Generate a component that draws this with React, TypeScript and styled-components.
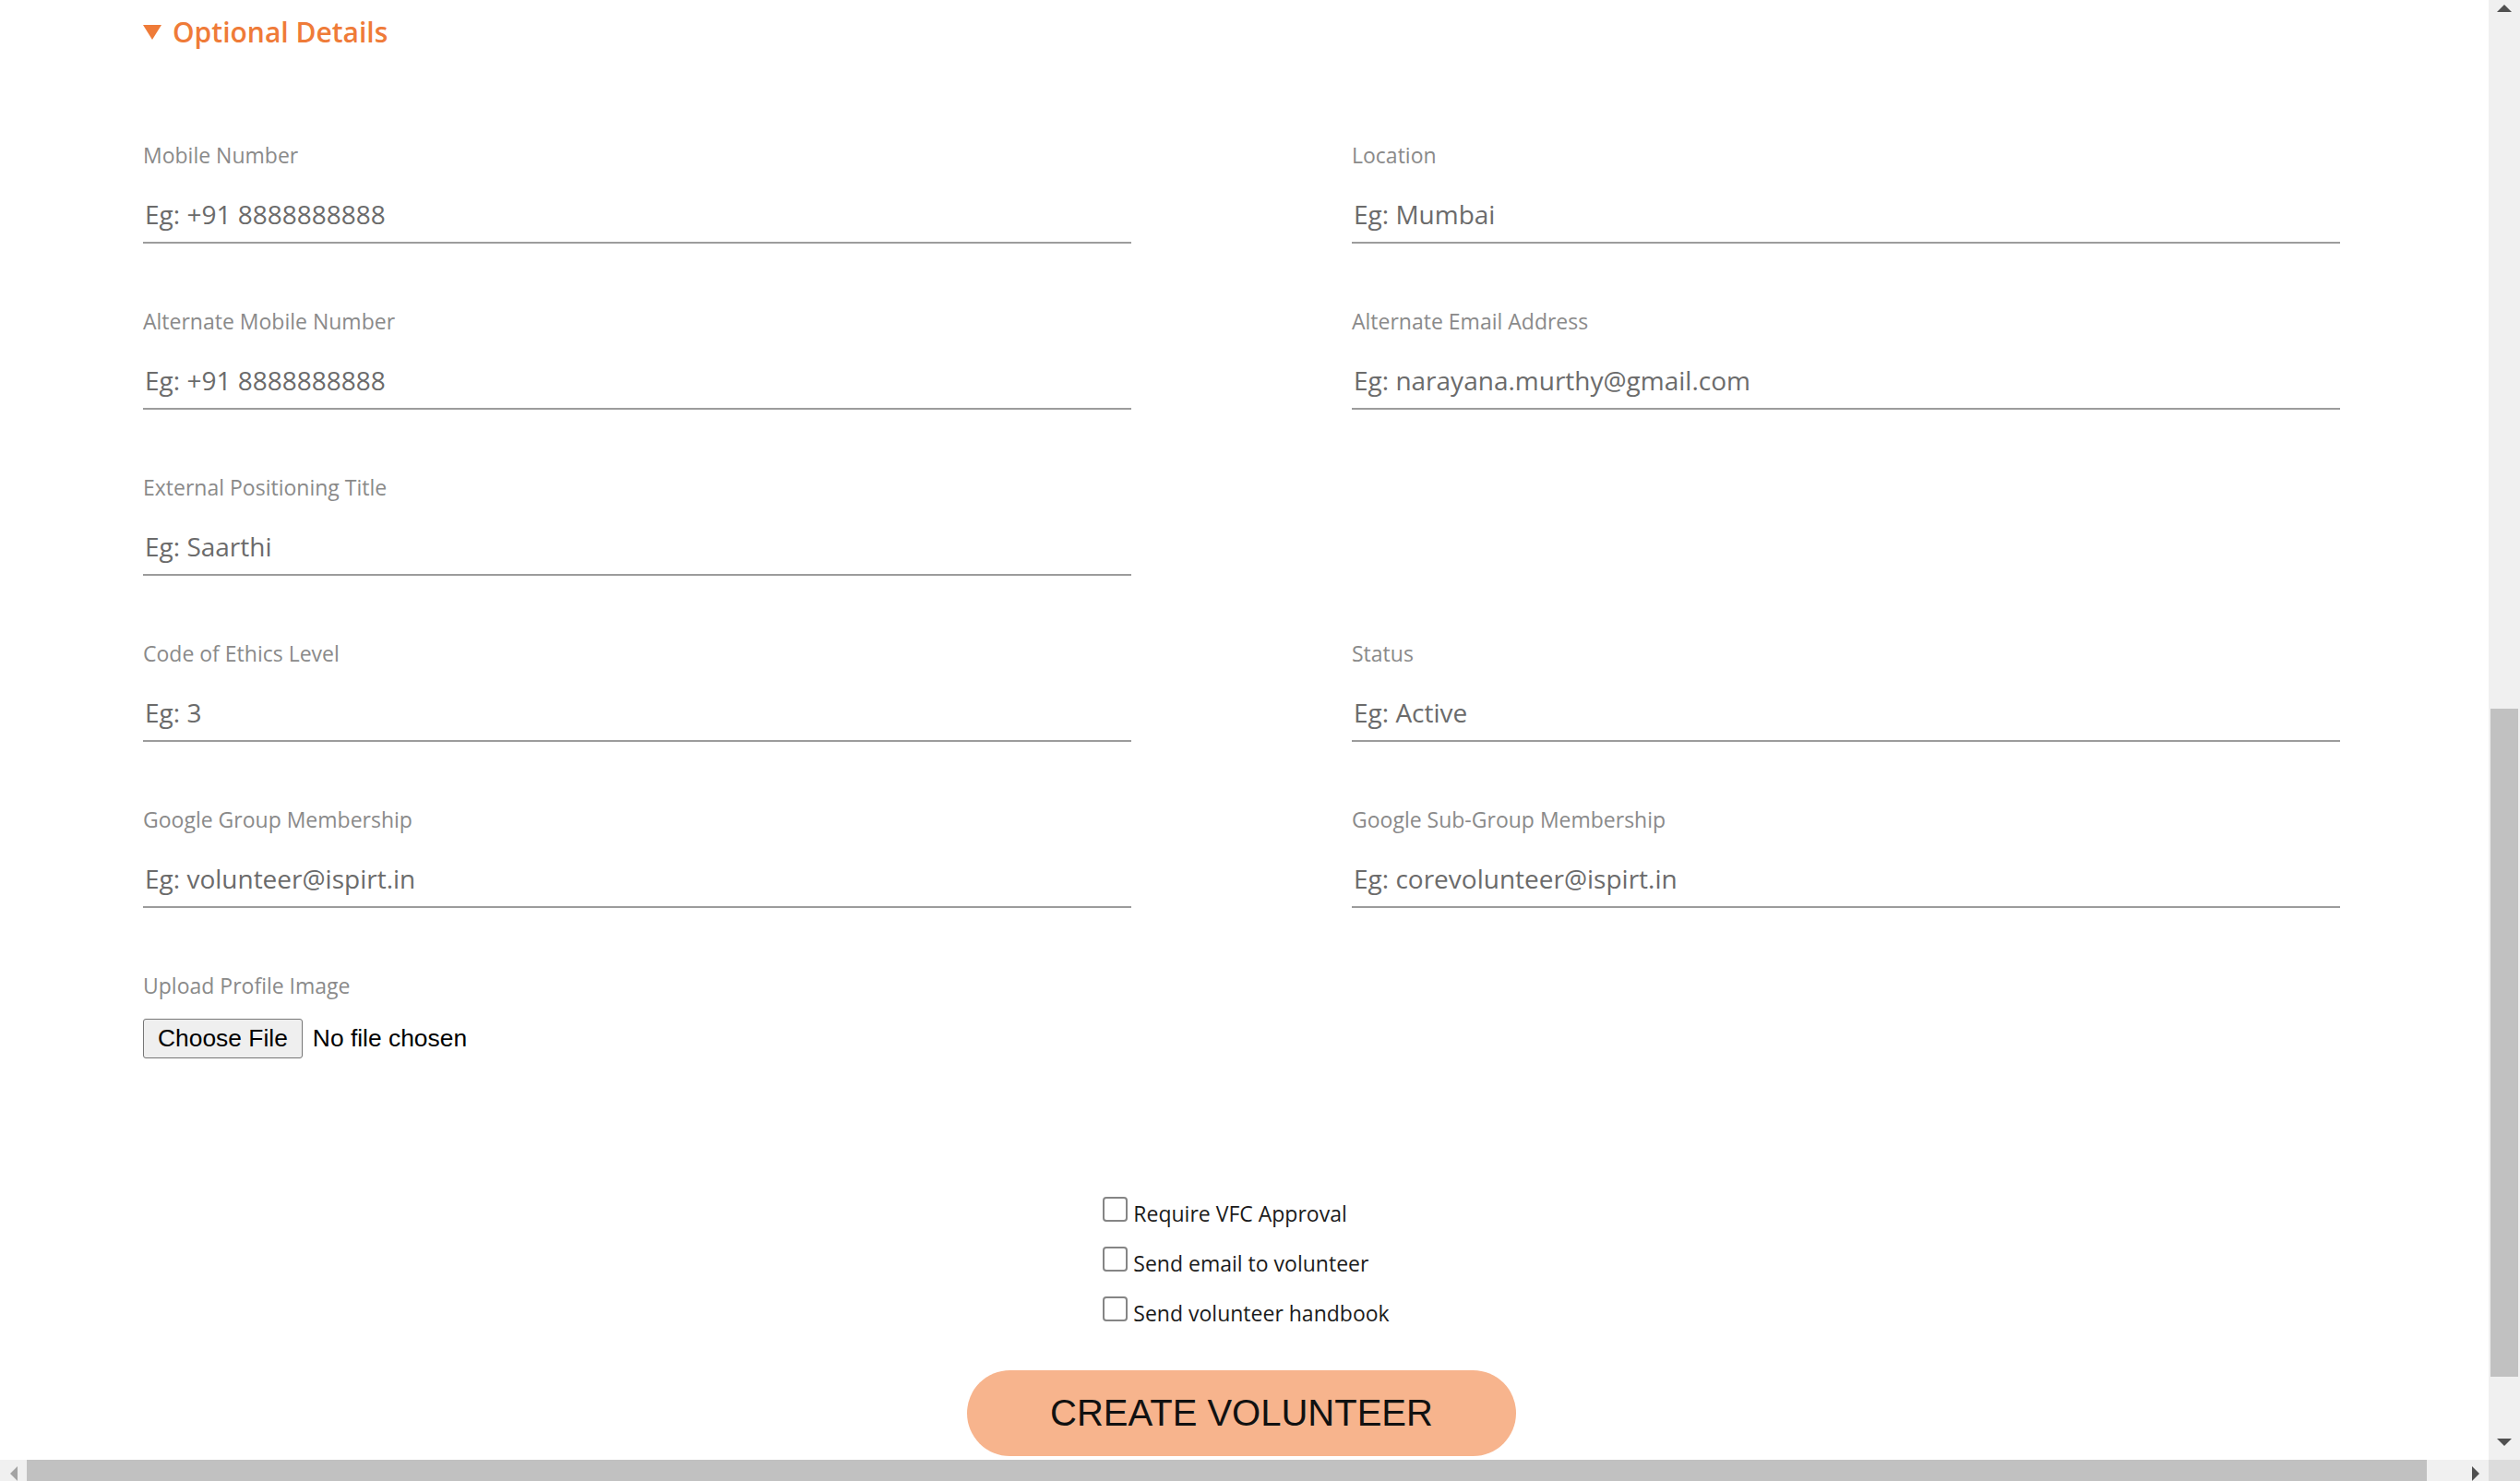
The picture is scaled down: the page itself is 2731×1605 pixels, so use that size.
import React from "react";
import styled, { createGlobalStyle, css } from "styled-components";

type FieldDef = { label: string; placeholder: string } | null;
type Dir = "up" | "down" | "left" | "right";

const optionalFields: FieldDef[] = [
  { label: "Mobile Number", placeholder: "Eg: +91 8888888888" },
  { label: "Location", placeholder: "Eg: Mumbai" },
  { label: "Alternate Mobile Number", placeholder: "Eg: +91 8888888888" },
  { label: "Alternate Email Address", placeholder: "Eg: narayana.murthy@gmail.com" },
  { label: "External Positioning Title", placeholder: "Eg: Saarthi" },
  null,
  { label: "Code of Ethics Level", placeholder: "Eg: 3" },
  { label: "Status", placeholder: "Eg: Active" },
  { label: "Google Group Membership", placeholder: "Eg: volunteer@ispirt.in" },
  { label: "Google Sub-Group Membership", placeholder: "Eg: corevolunteer@ispirt.in" },
];

const options = ["Require VFC Approval", "Send email to volunteer", "Send volunteer handbook"];

const TRACK = "#f0f0f0";

const GlobalStyle = createGlobalStyle`
  html, body {
    margin: 0;
    padding: 0;
    height: 100%;
    overflow: hidden;
    background: #fff;
  }
  #root {
    height: 100%;
  }
`;

/* window frame: page on the left/top, scrollbars on the right and bottom */
const Frame = styled.div`
  display: grid;
  grid-template-columns: 1fr 34px;
  grid-template-rows: 1fr 23px;
  width: 100vw;
  height: 100vh;
  overflow: hidden;
  font-family: "Open Sans", "Noto Sans", sans-serif;
`;

const Main = styled.main`
  min-width: 0;
  min-height: 0;
  overflow: hidden;
  padding: 13px 0 0 155px;
  background: #fff;
`;

const VBar = styled.div`
  display: flex;
  flex-direction: column;
  background: ${TRACK};
`;

const HBar = styled.div`
  display: flex;
  background: ${TRACK};
`;

const Corner = styled.div`
  background: #dcdcdc;
`;

const BarButton = styled.div<{ $w: number; $h: number; $pad: string }>`
  flex: none;
  display: flex;
  justify-content: center;
  align-items: flex-start;
  width: ${(p) => p.$w}px;
  height: ${(p) => p.$h}px;
  padding: ${(p) => p.$pad};
  box-sizing: border-box;
`;

const arrowShape = {
  up: css`
    border-width: 0 8px 8px;
    border-bottom-color: var(--c);
  `,
  down: css`
    border-width: 8px 8px 0;
    border-top-color: var(--c);
  `,
  left: css`
    border-width: 8px 8px 8px 0;
    border-right-color: var(--c);
  `,
  right: css`
    border-width: 8px 0 8px 8px;
    border-left-color: var(--c);
  `,
};

const Arrow = styled.span<{ $dir: Dir; $off?: boolean }>`
  --c: ${(p) => (p.$off ? "#a3a3a3" : "#505050")};
  width: 0;
  height: 0;
  border-style: solid;
  border-color: transparent;
  ${(p) => arrowShape[p.$dir]}
`;

const VTrack = styled.div`
  flex: 1;
  display: flex;
  flex-direction: column;
  padding: 0 2px;
`;

const HTrack = styled.div`
  flex: 1;
  display: flex;
`;

const Thumb = styled.div<{ $offset: number; $length: number; $vertical?: boolean }>`
  flex: none;
  background: #c1c1c1;
  ${(p) =>
    p.$vertical
      ? css`
          margin-top: ${p.$offset}px;
          height: ${p.$length}px;
        `
      : css`
          margin-left: ${p.$offset}px;
          width: ${p.$length}px;
        `}
`;

const Form = styled.form`
  width: 2381px;
`;

const Section = styled.details``;

const Summary = styled.summary`
  display: flex;
  align-items: center;
  gap: 12px;
  height: 44px;
  list-style: none;
  cursor: pointer;
  font: 600 30px/44px "Open Sans", sans-serif;
  color: #ef7b38;

  &::-webkit-details-marker {
    display: none;
  }
`;

const Caret = styled.span`
  width: 0;
  height: 0;
  border-left: 10px solid transparent;
  border-right: 10px solid transparent;
  border-top: 16px solid #ef7b38;
`;

const FieldGrid = styled.div`
  display: grid;
  grid-template-columns: 1071px 1071px;
  column-gap: 239px;
  row-gap: 68px;
  margin-top: 95px;
`;

const Field = styled.div`
  display: flex;
  flex-direction: column;
`;

const Label = styled.label`
  font: 400 23px/32px "Open Sans", sans-serif;
  color: #8a8a8a;
`;

const TextInput = styled.input`
  margin-top: 24px;
  height: 56px;
  box-sizing: border-box;
  padding: 0 2px 6px;
  border: none;
  border-bottom: 2px solid #9c9c9c;
  outline: none;
  background: transparent;
  font: 400 28px "Open Sans", sans-serif;
  color: #333;

  &::placeholder {
    color: #6b6b6b;
  }
`;

const FileInput = styled.input`
  align-self: flex-start;
  margin-top: 20px;
  height: 43px;
  font: 400 26.4px "Liberation Sans", Arial, sans-serif;
  color: #000;

  &::file-selector-button {
    height: 43px;
    margin: 0 11px 0 0;
    padding: 0 15px;
    border: 1px solid #767676;
    border-radius: 3px;
    background: #efefef;
    color: #000;
    font: inherit;
  }
`;

const Actions = styled.div`
  display: flex;
  flex-direction: column;
  align-items: center;
  margin-top: 141px;
`;

const CheckGroup = styled.div`
  display: flex;
  flex-direction: column;
  align-items: flex-start;
  margin-left: 10px;
`;

const CheckRow = styled.label`
  display: flex;
  align-items: center;
  height: 54px;
  font: 400 23px/32px "Open Sans", sans-serif;
  color: #1b1b1b;
`;

const Checkbox = styled.input`
  appearance: none;
  width: 27px;
  height: 27px;
  box-sizing: border-box;
  margin: -9px 6px 0 0;
  border: 2px solid #858585;
  border-radius: 4px;
  background: #fff;
`;

const SubmitButton = styled.button`
  margin-top: 35px;
  width: 595px;
  height: 93px;
  border: none;
  border-radius: 47px;
  background: #f7b48d;
  color: #111;
  font: 400 40px "Liberation Sans", Arial, sans-serif;
  cursor: pointer;
`;

const App = () => (
  <>
    <GlobalStyle />
    <Frame>
      <Main>
        <Form>
          <Section open>
            <Summary>
              <Caret />
              Optional Details
            </Summary>
            <FieldGrid>
              {optionalFields.map((f, i) =>
                f ? (
                  <Field key={f.label}>
                    <Label>{f.label}</Label>
                    <TextInput type="text" placeholder={f.placeholder} />
                  </Field>
                ) : (
                  <div key={"empty" + i} />
                )
              )}
              <Field>
                <Label>Upload Profile Image</Label>
                <FileInput type="file" accept="image/*" />
              </Field>
            </FieldGrid>
          </Section>

          <Actions>
            <CheckGroup>
              {options.map((o) => (
                <CheckRow key={o}>
                  <Checkbox type="checkbox" />
                  {o}
                </CheckRow>
              ))}
            </CheckGroup>
            <SubmitButton type="button">CREATE VOLUNTEER</SubmitButton>
          </Actions>
        </Form>
      </Main>

      <VBar>
        <BarButton $w={34} $h={30} $pad="5px 0 0">
          <Arrow $dir="up" />
        </BarButton>
        <VTrack>
          <Thumb $vertical $offset={738} $length={724} />
        </VTrack>
        <BarButton $w={34} $h={30} $pad="7px 0 0">
          <Arrow $dir="down" />
        </BarButton>
      </VBar>

      <HBar>
        <BarButton $w={29} $h={23} $pad="7px 0 0">
          <Arrow $dir="left" $off />
        </BarButton>
        <HTrack>
          <Thumb $offset={0} $length={2601} />
        </HTrack>
        <BarButton $w={29} $h={23} $pad="7px 0 0">
          <Arrow $dir="right" />
        </BarButton>
      </HBar>

      <Corner />
    </Frame>
  </>
);

export default App;
